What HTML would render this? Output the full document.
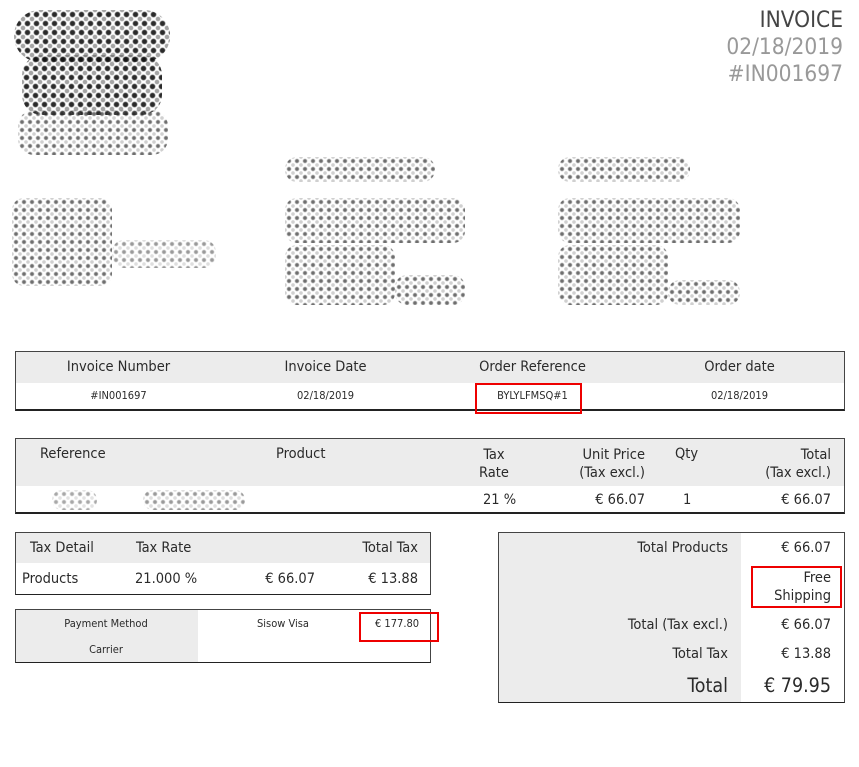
<!DOCTYPE html>
<html><head><meta charset="utf-8"><style>
*{margin:0;padding:0;box-sizing:border-box}
body{width:859px;height:767px;background:#fff;position:relative;font-family:"DejaVu Sans Condensed","DejaVu Sans","Liberation Sans",sans-serif;font-stretch:condensed;color:#222;overflow:hidden}
.a{position:absolute}
.dots{position:absolute;border-radius:12px;background:radial-gradient(circle,rgba(50,50,50,.7) 1.3px,rgba(130,130,130,.35) 2.2px,transparent 2.8px) 0 0/8px 8px,radial-gradient(circle,rgba(120,120,120,.35) 1.3px,transparent 2.3px) 4px 4px/8px 8px}
.dk{background:radial-gradient(circle,rgba(20,20,20,.9) 2px,rgba(90,90,90,.5) 2.8px,transparent 3.4px) 0 0/9px 9px,radial-gradient(circle,rgba(90,90,90,.55) 1.8px,transparent 2.8px) 4.5px 4.5px/9px 9px}
.box{position:absolute;border:1px solid #444;border-bottom:2px solid #222}
.g{background:#ececec}
.t{position:absolute;font-size:14.5px;white-space:nowrap;color:#2a2a2a}
.s{font-size:11px}
.red{position:absolute;border:2px solid #e00}
</style></head><body>
<div class="a" style="right:16px;top:7px;text-align:right;font-size:22.5px;line-height:27px">
<div style="color:#444">INVOICE</div><div style="color:#999">02/18/2019</div><div style="color:#999">#IN001697</div></div>
<div class="dots dk" style="left:14px;top:10px;width:156px;height:52px;border-radius:26px"></div>
<div class="dots dk" style="left:22px;top:55px;width:140px;height:60px;border-radius:20px"></div>
<div class="dots" style="left:18px;top:110px;width:150px;height:45px;border-radius:16px"></div>
<div class="dots" style="left:12px;top:198px;width:100px;height:88px"></div>
<div class="dots" style="left:112px;top:240px;width:104px;height:28px;opacity:.7"></div>
<div class="dots" style="left:285px;top:157px;width:150px;height:25px"></div>
<div class="dots" style="left:285px;top:198px;width:180px;height:45px"></div>
<div class="dots" style="left:285px;top:245px;width:110px;height:60px"></div>
<div class="dots" style="left:395px;top:275px;width:70px;height:30px"></div>
<div class="dots" style="left:558px;top:157px;width:132px;height:25px"></div>
<div class="dots" style="left:558px;top:198px;width:182px;height:45px"></div>
<div class="dots" style="left:558px;top:245px;width:110px;height:60px"></div>
<div class="dots" style="left:668px;top:280px;width:72px;height:25px"></div>

<div class="box" style="left:15px;top:351px;width:830px;height:60px"><div class="g" style="height:31px"></div></div>
<div class="t" style="left:15px;top:359px;width:207px;text-align:center">Invoice Number</div>
<div class="t" style="left:222px;top:359px;width:207px;text-align:center">Invoice Date</div>
<div class="t" style="left:429px;top:359px;width:207px;text-align:center">Order Reference</div>
<div class="t" style="left:636px;top:359px;width:207px;text-align:center">Order date</div>
<div class="t s" style="left:15px;top:389px;width:207px;text-align:center">#IN001697</div>
<div class="t s" style="left:222px;top:389px;width:207px;text-align:center">02/18/2019</div>
<div class="t s" style="left:429px;top:389px;width:207px;text-align:center">BYLYLFMSQ#1</div>
<div class="t s" style="left:636px;top:389px;width:207px;text-align:center">02/18/2019</div>
<div class="red" style="left:475px;top:383px;width:107px;height:31px"></div>

<div class="box" style="left:15px;top:438px;width:830px;height:76px"><div class="g" style="height:47px"></div></div>
<div class="t" style="left:40px;top:446px">Reference</div>
<div class="t" style="left:276px;top:446px">Product</div>
<div class="t" style="left:468px;top:446px;width:52px;text-align:center;line-height:18px">Tax<br>Rate</div>
<div class="t" style="left:530px;top:446px;width:115px;text-align:right;line-height:18px">Unit Price<br>(Tax excl.)</div>
<div class="t" style="left:675px;top:446px">Qty</div>
<div class="t" style="left:710px;top:446px;width:121px;text-align:right;line-height:18px">Total<br>(Tax excl.)</div>
<div class="dots" style="left:52px;top:490px;width:45px;height:20px;opacity:.6"></div>
<div class="dots" style="left:143px;top:490px;width:102px;height:20px;opacity:.7"></div>
<div class="t" style="left:483px;top:492px">21 %</div>
<div class="t" style="left:540px;top:492px;width:105px;text-align:right">€ 66.07</div>
<div class="t" style="left:683px;top:492px">1</div>
<div class="t" style="left:720px;top:492px;width:111px;text-align:right">€ 66.07</div>

<div class="box" style="left:15px;top:532px;width:416px;height:63px;border-bottom-width:1px"><div class="g" style="height:30px"></div></div>
<div class="t" style="left:30px;top:540px">Tax Detail</div>
<div class="t" style="left:136px;top:540px">Tax Rate</div>
<div class="t" style="left:330px;top:540px;width:88px;text-align:right">Total Tax</div>
<div class="t" style="left:22px;top:571px">Products</div>
<div class="t" style="left:135px;top:571px">21.000 %</div>
<div class="t" style="left:220px;top:571px;width:95px;text-align:right">€ 66.07</div>
<div class="t" style="left:320px;top:571px;width:98px;text-align:right">€ 13.88</div>

<div class="box" style="left:15px;top:609px;width:416px;height:54px;border-bottom-width:1px"><div class="g" style="width:182px;height:52px"></div></div>
<div class="t s" style="left:15px;top:617px;width:182px;text-align:center">Payment Method</div>
<div class="t s" style="left:15px;top:643px;width:182px;text-align:center">Carrier</div>
<div class="t s" style="left:257px;top:617px">Sisow Visa</div>
<div class="t s" style="left:375px;top:617px">€ 177.80</div>
<div class="red" style="left:359px;top:612px;width:80px;height:30px"></div>

<div class="box" style="left:498px;top:532px;width:347px;height:171px;border-bottom-width:1px"><div class="g" style="width:242px;height:169px"></div></div>
<div class="t" style="left:500px;top:540px;width:228px;text-align:right">Total Products</div>
<div class="t" style="left:740px;top:540px;width:91px;text-align:right">€ 66.07</div>
<div class="t" style="left:740px;top:569px;width:91px;text-align:right;line-height:18px">Free<br>Shipping</div>
<div class="red" style="left:751px;top:566px;width:91px;height:42px"></div>
<div class="t" style="left:500px;top:617px;width:228px;text-align:right">Total (Tax excl.)</div>
<div class="t" style="left:740px;top:617px;width:91px;text-align:right">€ 66.07</div>
<div class="t" style="left:500px;top:646px;width:228px;text-align:right">Total Tax</div>
<div class="t" style="left:740px;top:646px;width:91px;text-align:right">€ 13.88</div>
<div class="t" style="left:500px;top:674px;width:228px;text-align:right;font-size:19.5px">Total</div>
<div class="t" style="left:730px;top:674px;width:101px;text-align:right;font-size:19.5px">€ 79.95</div>
</body></html>
